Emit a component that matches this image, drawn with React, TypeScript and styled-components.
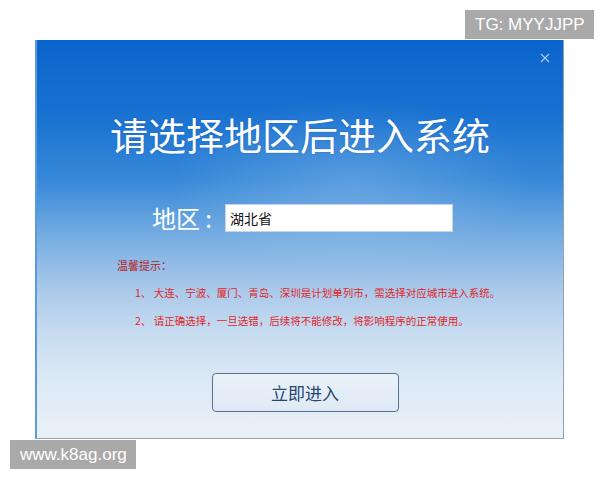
import React from "react";
import styled, { createGlobalStyle } from "styled-components";

const GlobalStyle = createGlobalStyle`
  html, body {
    margin: 0;
    padding: 0;
    background: #ffffff;
  }
  body {
    font-family: "Noto Sans CJK SC", "Noto Sans", sans-serif;
  }
`;

const Page = styled.div`
  position: relative;
  width: 600px;
  height: 480px;
  overflow: hidden;
  background: #ffffff;
  padding-top: 40px;
  box-sizing: border-box;
`;

const Dialog = styled.div`
  position: relative;
  margin-left: 35px;
  width: 529px;
  height: 399px;
  box-sizing: border-box;
  border-left: 2px solid #5d9ad8;
  border-right: 1px solid #8fa2b8;
  border-bottom: 1px solid #8fa2b8;
  background:
    radial-gradient(ellipse 260px 120px at 60% 36%, rgba(255, 255, 255, 0.18), rgba(255, 255, 255, 0) 70%),
    linear-gradient(
      180deg,
      #0b64cb 0%,
      #1871d1 18%,
      #3688d8 35%,
      #78aee2 50%,
      #a8c8ea 62%,
      #c8dcf0 74%,
      #dde9f5 86%,
      #eaf0f8 100%
    );
  display: flex;
  flex-direction: column;
  align-items: center;
`;

const CloseButton = styled.button`
  position: absolute;
  top: 11px;
  right: 11px;
  width: 14px;
  height: 14px;
  padding: 0;
  border: none;
  background: transparent;
  cursor: pointer;
  display: flex;
  align-items: center;
  justify-content: center;
`;

const Title = styled.h1`
  margin: 70px 0 0;
  font-size: 38px;
  line-height: 48px;
  font-weight: 400;
  color: #ffffff;
  letter-spacing: 0;
  text-shadow: 0 0 2px rgba(0, 40, 120, 0.25);
`;

const RegionRow = styled.div`
  margin-top: 45px;
  margin-left: 5px;
  display: flex;
  align-items: center;
  gap: 13px;
`;

const RegionLabel = styled.label`
  font-size: 24px;
  line-height: 30px;
  color: #ffffff;
  white-space: pre;
`;

const RegionInput = styled.input`
  width: 228px;
  height: 28px;
  box-sizing: border-box;
  border: 1px solid #c8d4e2;
  background: #ffffff;
  padding: 0 4px;
  font-family: "Noto Sans CJK SC", sans-serif;
  font-size: 14px;
  color: #111111;
  outline: none;
`;

const Notice = styled.div`
  align-self: stretch;
  margin-top: 25px;
  padding-left: 80px;
  display: flex;
  flex-direction: column;
`;

const NoticeTitle = styled.div`
  font-size: 11px;
  line-height: 14px;
  color: #b81c1c;
`;

const NoticeList = styled.ol`
  margin: 0;
  padding: 0 0 0 18px;
  list-style: none;
  display: flex;
  flex-direction: column;
  gap: 14px;
  margin-top: 14px;
`;

const NoticeItem = styled.li`
  font-size: 10.5px;
  line-height: 14px;
  color: #e0262a;
  white-space: nowrap;
`;

const EnterButton = styled.button`
  margin-top: 45px;
  margin-left: 10px;
  width: 187px;
  height: 39px;
  box-sizing: border-box;
  border: 1px solid #5a7191;
  border-radius: 4px;
  background: linear-gradient(180deg, #eaf1f9 0%, #dfe9f5 100%);
  font-family: "Noto Sans CJK SC", sans-serif;
  font-size: 17px;
  color: #23466e;
  cursor: pointer;
`;

const Watermark = styled.div<{ $top: number; $left: number }>`
  position: absolute;
  top: ${(p) => p.$top}px;
  left: ${(p) => p.$left}px;
  background: #a9a9a9;
  color: #ffffff;
  font-family: "Liberation Sans", Arial, sans-serif;
  font-size: 17px;
  line-height: 29px;
  padding: 0 9px 0 10px;
`;

export default function App() {
  return (
    <>
      <GlobalStyle />
      <Page>
        <Dialog>
          <CloseButton aria-label="关闭">
            <svg width="10" height="10" viewBox="0 0 10 10">
              <path d="M1 1 L9 9 M9 1 L1 9" stroke="#a9cdf2" strokeWidth="1.1" fill="none" />
            </svg>
          </CloseButton>
          <Title>请选择地区后进入系统</Title>
          <RegionRow>
            <RegionLabel htmlFor="region">地区 :</RegionLabel>
            <RegionInput id="region" defaultValue="湖北省" />
          </RegionRow>
          <Notice>
            <NoticeTitle>温馨提示：</NoticeTitle>
            <NoticeList>
              <NoticeItem>1、 大连、宁波、厦门、青岛、深圳是计划单列市，需选择对应城市进入系统。</NoticeItem>
              <NoticeItem>2、 请正确选择，一旦选错，后续将不能修改，将影响程序的正常使用。</NoticeItem>
            </NoticeList>
          </Notice>
          <EnterButton>立即进入</EnterButton>
        </Dialog>
        <Watermark $top={10} $left={465}>TG: MYYJJPP</Watermark>
        <Watermark $top={440} $left={10}>www.k8ag.org</Watermark>
      </Page>
    </>
  );
}
